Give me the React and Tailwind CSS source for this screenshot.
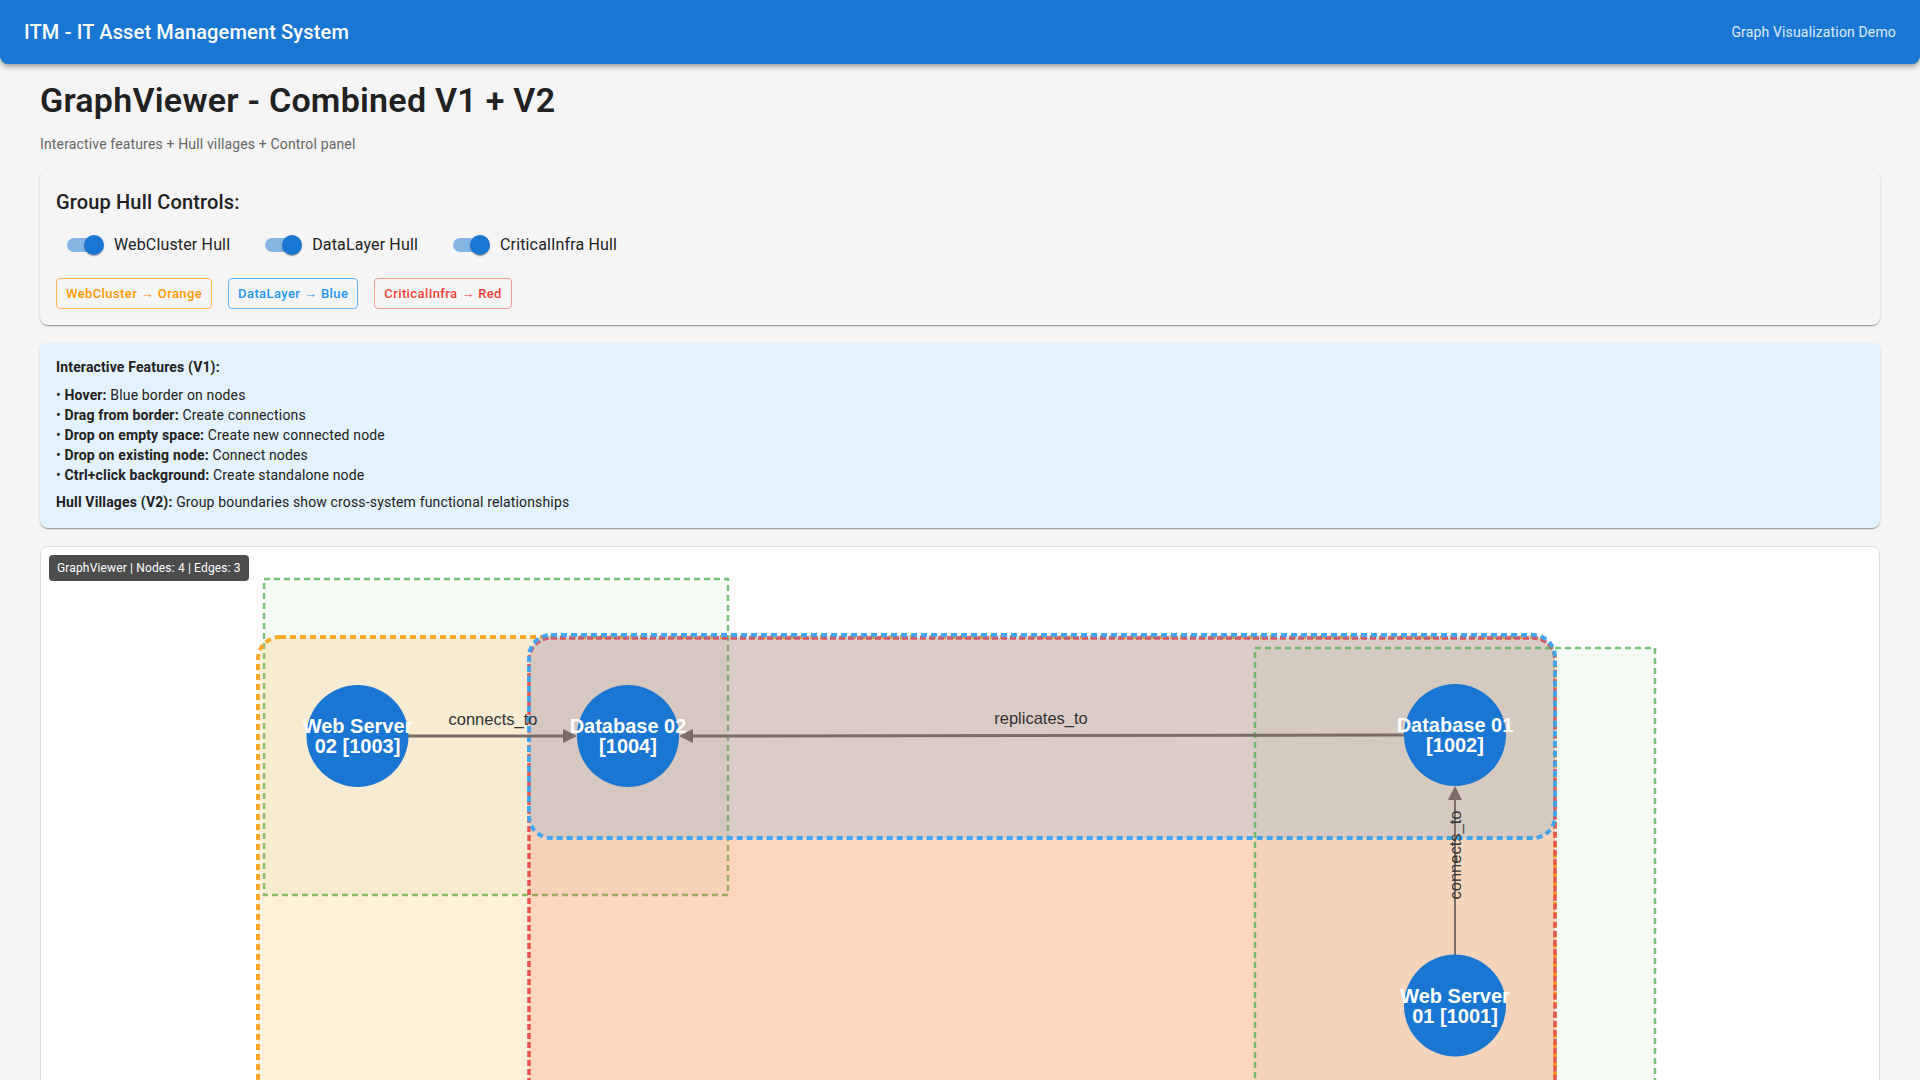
import React from "react";

const TOGGLES = ["WebCluster Hull", "DataLayer Hull", "CriticalInfra Hull"];

const CHIPS = [
  { label: "WebCluster → Orange", cls: "border-[#ffb74d] text-[#ff9800]" },
  { label: "DataLayer → Blue", cls: "border-[#64b5f6] text-[#2196f3]" },
  { label: "CriticalInfra → Red", cls: "border-[#ef9a9a] text-[#f44336]" },
];

const FEATURES = [
  ["Hover:", "Blue border on nodes"],
  ["Drag from border:", "Create connections"],
  ["Drop on empty space:", "Create new connected node"],
  ["Drop on existing node:", "Connect nodes"],
  ["Ctrl+click background:", "Create standalone node"],
];

// node centres in graph-canvas coordinates
const NODES = [
  { id: 1003, lines: ["Web Server", "02 [1003]"], x: 316.5, y: 189 },
  { id: 1004, lines: ["Database 02", "[1004]"], x: 587, y: 189 },
  { id: 1002, lines: ["Database 01", "[1002]"], x: 1414, y: 188 },
  { id: 1001, lines: ["Web Server", "01 [1001]"], x: 1414, y: 458.5 },
];

const EDGE = "#7a6d67";
const FONT = "Liberation Sans, Arial, Helvetica, sans-serif";
const PAPER =
  "shadow-[0_2px_1px_-1px_rgba(0,0,0,0.2),0_1px_1px_0_rgba(0,0,0,0.14),0_1px_3px_0_rgba(0,0,0,0.12)]";

function Toggle({ label }) {
  return (
    <label className="flex items-center">
      <span className="relative h-[14px] w-[34px] rounded-full bg-[#1976d2]/50">
        <span className="absolute left-[17px] top-[-3px] h-5 w-5 rounded-full bg-[#1976d2] shadow-[0_2px_1px_-1px_rgba(0,0,0,0.2),0_1px_1px_0_rgba(0,0,0,0.14),0_1px_3px_0_rgba(0,0,0,0.12)]" />
      </span>
      <span className="ml-[13px] text-base tracking-[0.15px] text-[#212121]">{label}</span>
    </label>
  );
}

function GraphCanvas() {
  return (
    <svg className="absolute left-0 top-0" width="1838" height="600">
      {/* hull villages */}
      <rect x="223" y="32" width="464" height="316" fill="#4caf50" fillOpacity="0.05" stroke="#4caf50" strokeOpacity="0.75" strokeWidth="2.5" strokeDasharray="6 4" />
      <rect x="217" y="90" width="1297" height="470" rx="22" fill="#ff9800" fillOpacity="0.15" stroke="#ffa726" strokeWidth="4" strokeDasharray="6 4" />
      <rect x="488" y="91" width="1026" height="469" rx="22" fill="#f44336" fillOpacity="0.15" stroke="#ef5350" strokeWidth="3.5" strokeDasharray="6 3" />
      <rect x="488" y="88" width="1026" height="203" rx="22" fill="#2196f3" fillOpacity="0.15" stroke="#42a5f5" strokeWidth="4" strokeDasharray="6 4" />
      <rect x="1214" y="101" width="400" height="470" fill="#4caf50" fillOpacity="0.05" stroke="#4caf50" strokeOpacity="0.75" strokeWidth="2.5" strokeDasharray="6 4" />

      {/* edges */}
      <line x1="367" y1="189" x2="524" y2="189" stroke={EDGE} strokeWidth="3" />
      <polygon points="536,189 522,182 522,196" fill={EDGE} />
      <line x1="650" y1="189" x2="1364" y2="188" stroke={EDGE} strokeWidth="3" />
      <polygon points="638,189 652,182 652,196" fill={EDGE} />
      <line x1="1414" y1="251" x2="1414" y2="408" stroke={EDGE} strokeWidth="2" />
      <polygon points="1414,239 1407,253 1421,253" fill={EDGE} />

      <g fontFamily={FONT} fontSize="16.5" fill="#333" textAnchor="middle" dominantBaseline="central">
        <text x="452" y="172">connects_to</text>
        <text x="1000" y="171">replicates_to</text>
        <text x="1414" y="308" transform="rotate(-90 1414 308)">connects_to</text>
      </g>

      {/* nodes */}
      {NODES.map((n) => (
        <g key={n.id}>
          <circle cx={n.x} cy={n.y} r="51" fill="#1976d2" />
          <text x={n.x} y={n.y - 10} fontFamily={FONT} fontSize="20" fontWeight="bold" fill="#fff" textAnchor="middle" dominantBaseline="central">
            {n.lines[0]}
          </text>
          <text x={n.x} y={n.y + 10} fontFamily={FONT} fontSize="20" fontWeight="bold" fill="#fff" textAnchor="middle" dominantBaseline="central">
            {n.lines[1]}
          </text>
        </g>
      ))}
    </svg>
  );
}

export default function App() {
  return (
    <div className="h-screen overflow-hidden bg-[#f5f5f5] font-['Roboto','Helvetica','Arial',sans-serif] text-[#212121]">
      <header className="flex h-16 items-center justify-between rounded-b-lg bg-[#1976d2] px-6 shadow-[0_2px_4px_-1px_rgba(0,0,0,0.2),0_4px_5px_0_rgba(0,0,0,0.14),0_1px_10px_0_rgba(0,0,0,0.12)]">
        <h2 className="text-xl font-medium tracking-[0.15px] text-white">ITM - IT Asset Management System</h2>
        <span className="text-sm tracking-[0.15px] text-white/85">Graph Visualization Demo</span>
      </header>

      <main className="px-10 pt-[15px]">
        <h1 className="text-[34px] font-semibold leading-[42px] tracking-[0.25px]">GraphViewer - Combined V1 + V2</h1>
        <p className="mb-4 mt-[13px] text-sm leading-5 tracking-[0.15px] text-[#666]">
          Interactive features + Hull villages + Control panel
        </p>

        {/* hull toggles */}
        <section className={`mb-[18px] rounded-lg bg-[#f5f5f5] p-4 ${PAPER}`}>
          <h3 className="mb-2 text-xl font-medium leading-8 tracking-[0.15px]">Group Hull Controls:</h3>
          <div className="flex h-[38px] items-center gap-[35px] pl-[11px]">
            {TOGGLES.map((t) => (
              <Toggle key={t} label={t} />
            ))}
          </div>
          <div className="mt-[14px] flex gap-4">
            {CHIPS.map((c) => (
              <span key={c.label} className={`rounded border px-[9px] py-[6px] text-[13px] font-medium leading-[17px] tracking-[0.4px] ${c.cls}`}>
                {c.label}
              </span>
            ))}
          </div>
        </section>

        {/* feature notes */}
        <section className={`mb-[18px] rounded-lg bg-[#e3f2fd] p-4 text-sm leading-5 tracking-[0.15px] ${PAPER}`}>
          <p className="mb-[10px] font-bold leading-4">Interactive Features (V1):</p>
          {FEATURES.map(([k, v]) => (
            <p key={k}>
              • <b className="font-bold">{k}</b> {v}
            </p>
          ))}
          <p className="mt-[7px]">
            <b className="font-bold">Hull Villages (V2):</b> Group boundaries show cross-system functional relationships
          </p>
        </section>

        {/* graph */}
        <div className="relative h-[600px] overflow-hidden rounded-t-lg border border-[#ddd] bg-white">
          <GraphCanvas />
          <div className="absolute left-2 top-2 z-10 rounded bg-black/70 px-2 py-[5px] text-xs leading-4 tracking-[0.15px] text-white">
            GraphViewer | Nodes: 4 | Edges: 3
          </div>
        </div>
      </main>
    </div>
  );
}
